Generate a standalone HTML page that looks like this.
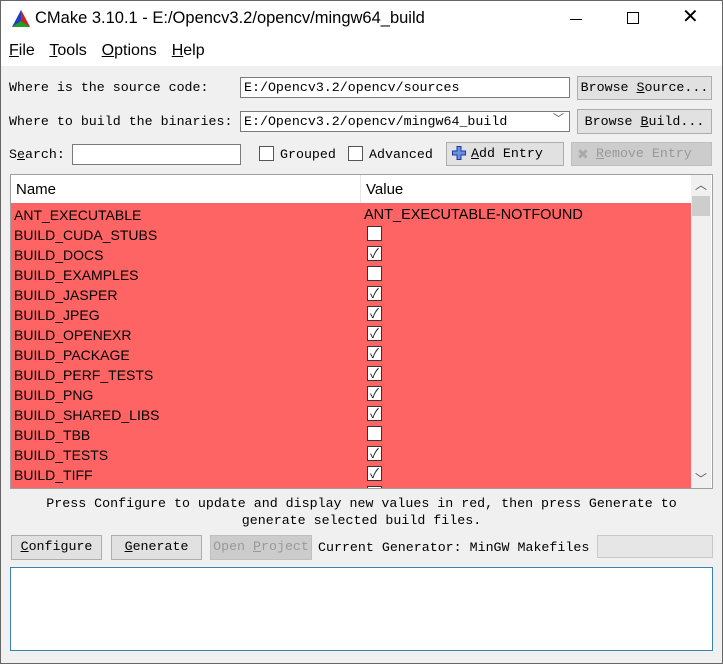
<!DOCTYPE html>
<html><head><style>
*{box-sizing:border-box;margin:0;padding:0}
body{width:723px;height:664px;overflow:hidden;background:#f0f0f0;position:relative;font-family:"Liberation Sans","Noto Sans CJK SC",sans-serif}
.a{position:absolute}
.mono{font-family:"Liberation Mono","Noto Sans CJK SC",monospace;font-size:13.3px;color:#000;white-space:nowrap}
.btn{position:absolute;background:#e1e1e1;border:1px solid #adadad;text-align:center;line-height:22px}
.inp{position:absolute;background:#fff;border:1px solid #7a7a7a;line-height:19px;padding-left:3px}
.cb{position:absolute;width:14px;height:14px;border:1px solid #333;background:#fff}
.row{position:absolute;left:11px;width:680px;height:20px;font-size:14px;line-height:20px;color:#000}
.row .n{position:absolute;left:3px;top:2px}
.row .v{position:absolute;left:353px;top:2px;font-size:14.5px}
.row .c{position:absolute;left:356px;top:3px;width:15px;height:15px;border:1px solid #333;background:#fff;font-size:13px;line-height:13px;text-align:center;color:#222}
u{text-decoration:underline}
</style></head><body>
<div class="a" style="left:0;top:0;width:723px;height:66px;background:#fff"></div>
<div class="a" style="left:0;top:0;width:723px;height:664px;border:1px solid #666"></div>
<svg class="a" style="left:11px;top:9px" width="20" height="20" viewBox="0 0 20 20"><polygon points="10,1 1,18 19,18" fill="#2040c0"/><polygon points="10,1 10,12 19,18" fill="#d02020"/><polygon points="1,18 10,12 19,18" fill="#20a020"/></svg>
<div class="a" style="left:35px;top:9px;font-size:16.5px;color:#000">CMake 3.10.1 - E:/Opencv3.2/opencv/mingw64_build</div>
<div class="a" style="left:570px;top:19px;width:12px;height:1px;background:#000"></div>
<div class="a" style="left:627px;top:12px;width:12px;height:12px;border:1px solid #000"></div>
<div class="a" style="left:682px;top:7px;font-size:20px;line-height:20px;color:#000">✕</div>
<div class="a" style="left:9px;top:42px;font-size:16px;color:#000;word-spacing:3px"><u>F</u>ile&nbsp; <u>T</u>ools&nbsp; <u>O</u>ptions&nbsp; <u>H</u>elp</div>

<div class="a mono" style="left:9px;top:80px">Where is the source code:</div>
<div class="inp mono" style="left:240px;top:77px;width:330px;height:21px">E:/Opencv3.2/opencv/sources</div>
<div class="btn mono" style="left:577px;top:76px;width:135px;height:24px">Browse <u>S</u>ource...</div>
<div class="a mono" style="left:9px;top:114px">Where to build the binaries:</div>
<div class="inp mono" style="left:240px;top:111px;width:330px;height:21px">E:/Opencv3.2/opencv/mingw64_build<span style="position:absolute;right:5px;top:-1px;color:#555;font-size:11px">﹀</span></div>
<div class="btn mono" style="left:577px;top:109px;width:135px;height:25px;line-height:23px">Browse <u>B</u>uild...</div>
<div class="a mono" style="left:9px;top:147px">S<u>e</u>arch:</div>
<div class="inp" style="left:72px;top:144px;width:169px;height:21px"></div>
<div class="cb" style="left:259px;top:146px;width:15px;height:15px;border-color:#555"></div>
<div class="a mono" style="left:280px;top:147px">Grouped</div>
<div class="cb" style="left:348px;top:146px;width:15px;height:15px;border-color:#555"></div>
<div class="a mono" style="left:369px;top:147px">Advanced</div>
<div class="btn mono" style="left:446px;top:142px;width:118px;height:24px;text-align:left;padding-left:24px"><u>A</u>dd Entry</div>
<svg class="a" style="left:452px;top:146px" width="14" height="14" viewBox="0 0 14 14"><path d="M5 0.5h4v4.5h4.5v4h-4.5v4.5h-4v-4.5h-4.5v-4h4.5z" fill="#6a8ee0" stroke="#1a3a9a"/></svg>
<div class="btn mono" style="left:571px;top:142px;width:141px;height:24px;background:#cccccc;border-color:#bfbfbf;color:#999;text-align:left;padding-left:24px"><u>R</u>emove Entry</div>
<div class="a" style="left:577px;top:146px;font-size:14px;color:#aaa">✖</div>

<div class="a" style="left:10px;top:174px;width:703px;height:315px;background:#fff;border:1px solid #a0a0a0"></div>
<div class="a" style="left:16px;top:181px;font-size:15px;color:#000">Name</div>
<div class="a" style="left:360px;top:175px;width:1px;height:28px;background:#e5e5e5"></div>
<div class="a" style="left:366px;top:181px;font-size:15px;color:#000">Value</div>
<div class="a" style="left:11px;top:203px;width:680px;height:285px;background:#ff6464;overflow:hidden">
<div style="position:relative;top:-203px;left:-11px">
<div class="row" style="top:203px"><span class="n">ANT_EXECUTABLE</span><span class="v">ANT_EXECUTABLE-NOTFOUND</span></div>
<div class="row" style="top:223px"><span class="n">BUILD_CUDA_STUBS</span><span class="c"></span></div>
<div class="row" style="top:243px"><span class="n">BUILD_DOCS</span><span class="c">✓</span></div>
<div class="row" style="top:263px"><span class="n">BUILD_EXAMPLES</span><span class="c"></span></div>
<div class="row" style="top:283px"><span class="n">BUILD_JASPER</span><span class="c">✓</span></div>
<div class="row" style="top:303px"><span class="n">BUILD_JPEG</span><span class="c">✓</span></div>
<div class="row" style="top:323px"><span class="n">BUILD_OPENEXR</span><span class="c">✓</span></div>
<div class="row" style="top:343px"><span class="n">BUILD_PACKAGE</span><span class="c">✓</span></div>
<div class="row" style="top:363px"><span class="n">BUILD_PERF_TESTS</span><span class="c">✓</span></div>
<div class="row" style="top:383px"><span class="n">BUILD_PNG</span><span class="c">✓</span></div>
<div class="row" style="top:403px"><span class="n">BUILD_SHARED_LIBS</span><span class="c">✓</span></div>
<div class="row" style="top:423px"><span class="n">BUILD_TBB</span><span class="c"></span></div>
<div class="row" style="top:443px"><span class="n">BUILD_TESTS</span><span class="c">✓</span></div>
<div class="row" style="top:463px"><span class="n">BUILD_TIFF</span><span class="c">✓</span></div>
<div class="row" style="top:483px"><span class="c"></span></div>
</div></div>
<div class="a" style="left:691px;top:175px;width:20px;height:313px;background:#f0f0f0"></div>
<div class="a" style="left:692px;top:196px;width:18px;height:20px;background:#cdcdcd"></div>
<div class="a" style="left:695px;top:176px;font-size:12px;color:#555">︿</div>
<div class="a" style="left:695px;top:470px;font-size:12px;color:#555">﹀</div>

<div class="a mono" style="left:0;top:495px;width:723px;text-align:center;line-height:17px;white-space:normal;padding:0 40px">Press Configure to update and display new values in red, then press Generate to generate selected build files.</div>
<div class="btn mono" style="left:11px;top:535px;width:91px;height:25px"><u>C</u>onfigure</div>
<div class="btn mono" style="left:111px;top:535px;width:91px;height:25px"><u>G</u>enerate</div>
<div class="btn mono" style="left:210px;top:535px;width:102px;height:25px;background:#cccccc;border-color:#bfbfbf;color:#999">Open <u>P</u>roject</div>
<div class="a mono" style="left:318px;top:540px">Current Generator: MinGW Makefiles</div>
<div class="a" style="left:597px;top:535px;width:116px;height:23px;background:#e6e6e6;border:1px solid #c8c8c8"></div>
<div class="a" style="left:10px;top:567px;width:703px;height:84px;background:#fff;border:1px solid #3c80b0"></div>
</body></html>
